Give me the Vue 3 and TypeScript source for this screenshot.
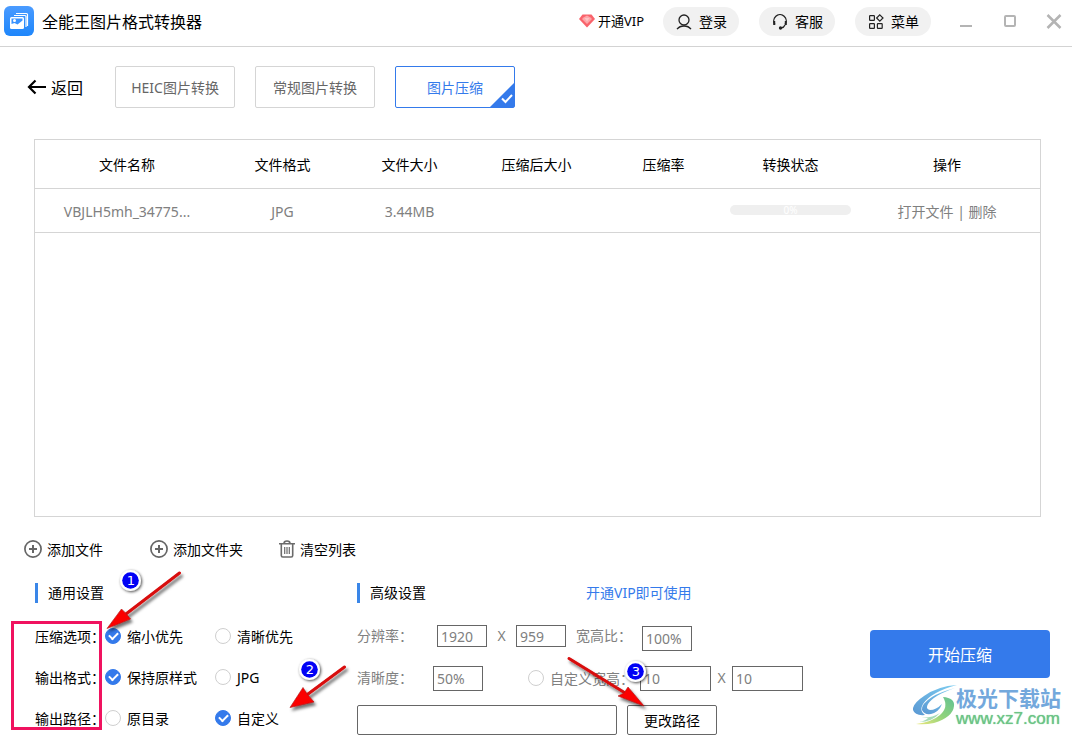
<script setup lang="ts">
import { ref } from 'vue'

interface FileRow {
  name: string
  format: string
  size: string
  compressed: string
  ratio: string
  progress: number
}

interface Choice {
  key: string
  label: string
  options: string[]
}

const tabs = ['HEIC图片转换', '常规图片转换', '图片压缩']
const activeTab = ref('图片压缩')

const columns = ['文件名称', '文件格式', '文件大小', '压缩后大小', '压缩率', '转换状态', '操作']
const files = ref<FileRow[]>([
  { name: 'VBJLH5mh_34775...', format: 'JPG', size: '3.44MB', compressed: '', ratio: '', progress: 0 },
])

const choices: Choice[] = [
  { key: 'mode', label: '压缩选项：', options: ['缩小优先', '清晰优先'] },
  { key: 'format', label: '输出格式：', options: ['保持原样式', 'JPG'] },
  { key: 'path', label: '输出路径：', options: ['原目录', '自定义'] },
]
const selected = ref<Record<string, string>>({ mode: '缩小优先', format: '保持原样式', path: '自定义' })

const resWidth = ref('1920')
const resHeight = ref('959')
const aspect = ref('100%')
const clarity = ref('50%')
const customSize = ref(false)
const customWidth = ref('10')
const customHeight = ref('10')
const outputPath = ref('')
</script>

<template>
  <div class="app">
    <header class="titlebar">
      <svg class="logo" viewBox="0 0 30 30" aria-hidden="true">
        <defs>
          <linearGradient id="logoFill" x1="0" y1="0" x2="0" y2="1">
            <stop offset="0" stop-color="#4a9bff" />
            <stop offset="1" stop-color="#1e86fb" />
          </linearGradient>
        </defs>
        <rect width="30" height="30" rx="6" fill="url(#logoFill)" />
        <path d="M12 7.500h10.500q1 0 1 1V20M10 9.500h11q1 0 1 1V21" fill="none" stroke="#fff" stroke-width="1.200" />
        <rect x="6" y="11" width="14" height="12" rx="1.500" fill="#fff" />
        <path d="M7.500 16v-3.500h11v2l-5 4-3-1.500-3 1z" fill="#3a93fe" />
        <circle cx="10.500" cy="14.500" r="1.500" fill="#fff" />
      </svg>
      <h1 class="title">全能王图片格式转换器</h1>
      <a class="vip" href="#">
        <svg width="16" height="14" viewBox="0 0 16 14" aria-hidden="true">
          <path d="M3.500.5h9L16 5l-8 8.500L0 5z" fill="#f9636b" />
          <path d="M4.500 3.500 8 1.500l3.500 2L13 5l-5 5-5-5z" fill="#fda5a8" />
          <path d="M5.500 4h5L8 7.500z" fill="#fdc3c3" />
        </svg>
        <span>开通VIP</span>
      </a>
      <nav class="pills">
        <button type="button" class="pill">
          <svg width="16" height="16" viewBox="0 0 16 16" fill="none" stroke="#222" stroke-width="1.300" aria-hidden="true">
            <circle cx="8" cy="6" r="5" />
            <path d="M1 15.200q2.500-3.200 7-3.200t7 3.200" />
          </svg>
          登录
        </button>
        <button type="button" class="pill">
          <svg width="16" height="16" viewBox="0 0 16 16" fill="none" stroke="#222" stroke-width="1.300" aria-hidden="true">
            <path d="M3 10.500a6.200 6.200 0 1 1 10 0" />
            <path d="M2.200 7v4M13.800 7v4" stroke-width="2" />
            <path d="M13 11q-1 2.500-4 3" />
            <circle cx="8.500" cy="14" r="1" fill="#222" />
          </svg>
          客服
        </button>
        <button type="button" class="pill">
          <svg width="16" height="16" viewBox="0 0 16 16" fill="none" stroke="#222" stroke-width="1.200" aria-hidden="true">
            <rect x="1.600" y="1.600" width="4.800" height="4.800" rx=".6" />
            <rect x="1.600" y="9.600" width="4.800" height="4.800" rx=".6" />
            <rect x="9.400" y="9.600" width="4.800" height="4.800" rx=".6" />
            <path d="M11.800.8 15 4l-3.200 3.200L8.600 4z" />
          </svg>
          菜单
        </button>
      </nav>
      <div class="window-controls">
        <button type="button" aria-label="最小化">
          <svg width="20" height="20" viewBox="0 0 20 20"><path d="M4 15h12" stroke="#b4b4b4" stroke-width="2" /></svg>
        </button>
        <button type="button" aria-label="最大化">
          <svg width="20" height="20" viewBox="0 0 20 20"><rect x="5" y="5" width="10" height="10" rx="1" fill="none" stroke="#b4b4b4" stroke-width="2" /></svg>
        </button>
        <button type="button" aria-label="关闭">
          <svg width="20" height="20" viewBox="0 0 20 20"><path d="m3.500 4 13 13M16.500 4l-13 13" stroke="#b4b4b4" stroke-width="2.500" /></svg>
        </button>
      </div>
    </header>

    <nav class="tabs">
      <button type="button" class="back">
        <svg width="20" height="16" viewBox="0 0 20 16" fill="none" stroke="#000" stroke-width="2.200" aria-hidden="true">
          <path d="M1.800 8H19M8.500 1.500 2 8l6.500 6.500" />
        </svg>
        <span>返回</span>
      </button>
      <button
        v-for="tab in tabs"
        :key="tab"
        type="button"
        class="tab"
        :class="{ active: tab === activeTab }"
        @click="activeTab = tab"
      >
        {{ tab }}
        <svg v-if="tab === activeTab" class="corner" width="24" height="24" viewBox="0 0 24 24" aria-hidden="true">
          <path d="M24 0v24H0z" fill="#347aeb" />
          <path d="m12 15.500 3.500 3.500 6.500-7" fill="none" stroke="#fff" stroke-width="2" />
        </svg>
      </button>
    </nav>

    <main class="panel">
      <table>
        <colgroup>
          <col class="first-col" />
          <col v-for="n in 5" :key="n" class="narrow" />
          <col />
        </colgroup>
        <thead>
          <tr><th v-for="column in columns" :key="column" scope="col">{{ column }}</th></tr>
        </thead>
        <tbody>
          <tr v-for="file in files" :key="file.name">
            <td>{{ file.name }}</td>
            <td>{{ file.format }}</td>
            <td>{{ file.size }}</td>
            <td>{{ file.compressed }}</td>
            <td>{{ file.ratio }}</td>
            <td>
              <div class="progress"><span>{{ file.progress }}%</span></div>
            </td>
            <td><a href="#">打开文件</a> | <a href="#">删除</a></td>
          </tr>
        </tbody>
      </table>
    </main>

    <div class="tools">
      <button type="button">
        <svg width="18" height="18" viewBox="0 0 18 18" fill="none" stroke="#666" aria-hidden="true">
          <circle cx="9" cy="9" r="8.100" stroke-width="1.700" />
          <path d="M9 5v8M5 9h8" stroke-width="2" />
        </svg>
        <span>添加文件</span>
      </button>
      <button type="button">
        <svg width="18" height="18" viewBox="0 0 18 18" fill="none" stroke="#666" aria-hidden="true">
          <circle cx="9" cy="9" r="8.100" stroke-width="1.700" />
          <path d="M9 5v8M5 9h8" stroke-width="2" />
        </svg>
        <span>添加文件夹</span>
      </button>
      <button type="button">
        <svg width="16" height="18" viewBox="0 0 16 18" fill="none" stroke="#6b6b6b" stroke-width="1.600" aria-hidden="true">
          <path d="M0 3.800h16M5 3.500q0-2.500 3-2.500t3 2.500M2.300 4v11.500q0 1.500 1.500 1.500h8.400q1.500 0 1.500-1.500V4" />
          <path d="M5.700 7v7M8 7v7M10.300 7v7" stroke-width="1.200" />
        </svg>
        <span>清空列表</span>
      </button>
    </div>

    <section class="settings">
      <div class="general">
        <h2>通用设置</h2>
        <div v-for="choice in choices" :key="choice.key" class="line" role="radiogroup" :aria-label="choice.label">
          <span class="name">{{ choice.label }}</span>
          <label v-for="option in choice.options" :key="option" class="option">
            <input v-model="selected[choice.key]" type="radio" :name="choice.key" :value="option" />
            <span>{{ option }}</span>
          </label>
        </div>
      </div>

      <div class="advanced">
        <div class="heading">
          <h2>高级设置</h2>
          <a href="#">开通VIP即可使用</a>
        </div>
        <div class="line">
          <label class="first" for="resWidth">分辨率：</label>
          <input id="resWidth" v-model="resWidth" class="box short" type="text" />
          <span class="times">X</span>
          <input v-model="resHeight" class="box short" type="text" aria-label="分辨率高度" />
          <label class="aspect" for="aspect">宽高比：</label>
          <input id="aspect" v-model="aspect" class="box low" type="text" />
        </div>
        <div class="line">
          <label class="second" for="clarity">清晰度：</label>
          <input id="clarity" v-model="clarity" class="box" type="text" />
          <label class="custom">
            <input v-model="customSize" type="radio" name="customSize" :value="true" />
            <span>自定义宽高：</span>
          </label>
          <input v-model="customWidth" class="box long" type="text" aria-label="自定义宽度" />
          <span class="times tight">X</span>
          <input v-model="customHeight" class="box long" type="text" aria-label="自定义高度" />
        </div>
        <div class="line">
          <input v-model="outputPath" class="path" type="text" aria-label="输出路径" />
          <button type="button" class="change">更改路径</button>
        </div>
      </div>

      <button type="button" class="start">开始压缩</button>

      <svg class="marks" width="720" height="175" viewBox="0 560 720 175" aria-hidden="true">
        <defs>
          <filter id="shade" x="-30%" y="-30%" width="170%" height="170%">
            <feDropShadow dx="2" dy="3" stdDeviation="1.800" flood-color="#000" flood-opacity=".55" />
          </filter>
          <filter id="halo" x="-30%" y="-30%" width="170%" height="170%">
            <feDropShadow dx="1" dy="1" stdDeviation="1.600" flood-color="#000" flood-opacity=".75" />
          </filter>
        </defs>
        <rect x="12.500" y="622.500" width="88" height="106" fill="none" stroke="#f0125f" stroke-width="3" />
        <g filter="url(#shade)">
          <g fill="none" stroke="#d80808" stroke-width="3" stroke-linecap="round">
            <path d="M179.500 573 124 615.500" />
            <path d="M344.500 667 306 695.500" />
            <path d="m569 658.500 57 35" />
          </g>
          <g fill="#fb0505" stroke="#a81010" stroke-width=".6">
            <path d="m107 628.500 14.500-19.500 4.500 4.500 4.500 5.500z" />
            <path d="m290 707.500 13-20 4.500 7 6.500 7.500z" />
            <path d="m644 706-26-10 6-3 4-6z" />
          </g>
        </g>
        <g filter="url(#halo)" fill="#fff">
          <circle cx="130.500" cy="580.500" r="10.500" />
          <circle cx="309.500" cy="669.500" r="10.500" />
          <circle cx="635.500" cy="671.500" r="10.500" />
        </g>
        <g fill="#0101f5">
          <circle cx="130.500" cy="580.500" r="8.300" />
          <circle cx="309.500" cy="669.500" r="8.300" />
          <circle cx="635.500" cy="671.500" r="8.300" />
        </g>
        <g class="digits">
          <text x="131" y="585">1</text>
          <text x="310" y="674">2</text>
          <text x="636" y="676">3</text>
        </g>
      </svg>

      <div class="watermark">
        <svg width="46" height="42" viewBox="0 0 46 42" aria-hidden="true">
          <defs>
            <linearGradient id="swirlBlue" x1="0" y1="1" x2="1" y2="0">
              <stop offset="0" stop-color="#5a98d3" />
              <stop offset="1" stop-color="#7dcdf0" />
            </linearGradient>
            <linearGradient id="swirlGreen" x1="0" y1="1" x2="1" y2="0">
              <stop offset="0" stop-color="#ece77c" />
              <stop offset=".5" stop-color="#8fd37c" />
              <stop offset="1" stop-color="#62c193" />
            </linearGradient>
          </defs>
          <path d="M44 0Q25 1 11 11-1 19 0 25q2 6 12 5-6-4-2-11Q18 7 44 0z" fill="url(#swirlBlue)" />
          <path d="M42 3Q27 7 19 12 8 19 9 25q2 5 9 4 8-2 11-10-6 6-12 6-5-1-2-6Q21 10 42 3z" fill="url(#swirlBlue)" />
          <path d="M30 12q12 1 11 9-1 11-20 17-9 2-18 1 16-2 24-9 9-8 3-18z" fill="url(#swirlGreen)" />
          <path d="M6 32q11 2 21-4-8 9-21 9 6-1 9-4-5 0-9-1z" fill="#a5dbb8" />
        </svg>
        <div class="site">
          <span class="site-name">极光下载站</span>
          <span class="site-url">www.xz7.com</span>
        </div>
      </div>
    </section>
  </div>
</template>

<style>
body {
  margin: 0;
  background: #fff;
}
</style>

<style scoped>
.app {
  display: flex;
  flex-direction: column;
  box-sizing: border-box;
  min-width: 1040px;
  min-height: 100vh;
  font-family: "Noto Sans", "Noto Sans CJK SC", sans-serif;
  font-size: 14px;
  line-height: 20px;
  color: #000;
  background: #fff;
}
button {
  display: flex;
  align-items: center;
  padding: 0;
  border: 0;
  background: none;
  font: inherit;
  color: inherit;
  white-space: nowrap;
  cursor: pointer;
}
a {
  color: inherit;
  text-decoration: none;
}
h1,
h2 {
  margin: 0;
  font-weight: 400;
}
svg {
  flex: none;
  display: block;
}
.titlebar {
  display: flex;
  align-items: center;
  height: 46px;
  padding: 0 8px 0 4px;
  border-bottom: 1px solid #d3d3d3;
}
.logo {
  width: 30px;
  height: 30px;
  margin-bottom: 4px;
}
.title {
  margin: 0 auto 2px 8px;
  font-size: 16px;
}
.vip {
  display: flex;
  align-items: center;
  gap: 3px;
  margin: 0 19px 4px 0;
  font-size: 13px;
}
.pills {
  display: flex;
  gap: 20px;
  margin-bottom: 3px;
}
.pill {
  gap: 7px;
  height: 29px;
  padding: 0 12px 0 13px;
  border-radius: 15px;
  background: #f1f1f1;
}
.window-controls {
  display: flex;
  gap: 24px;
  margin: 0 0 4px 25px;
}
.tabs {
  display: flex;
  gap: 20px;
  padding: 19px 27px 31px;
}
.back {
  gap: 4px;
  margin-right: 12px;
  font-size: 16px;
}
.back span,
.tools span,
.name,
.option span,
.custom span {
  padding-top: 2px;
}
.tab {
  position: relative;
  justify-content: center;
  box-sizing: border-box;
  width: 120px;
  height: 42px;
  padding-top: 2px;
  border: 1px solid #d5d5d5;
  border-radius: 2px;
  color: #666;
}
.tab.active {
  border-color: #347aeb;
  color: #347aeb;
}
.corner {
  position: absolute;
  right: 0;
  bottom: 0;
}
.panel {
  flex: 1;
  margin: 0 31px 0 34px;
  border: 1px solid #d5d5d5;
}
table {
  width: 100%;
  table-layout: fixed;
  border-collapse: separate;
  border-spacing: 0;
  text-align: center;
}
.first-col {
  width: 184px;
}
.narrow {
  width: 127px;
}
th,
td {
  box-sizing: border-box;
  padding: 2px 0 0;
  border-bottom: 1px solid #d5d5d5;
  white-space: nowrap;
}
th {
  height: 49px;
  font-weight: 400;
}
td {
  height: 44px;
  color: #808080;
}
.progress {
  display: flex;
  align-items: center;
  justify-content: center;
  height: 10px;
  margin: 0 3px 4px;
  border-radius: 5px;
  background: #efefef;
  color: #fff;
  font-size: 10px;
}
.tools {
  display: flex;
  height: 22px;
  padding: 21px 24px 23px;
}
.tools button {
  gap: 5px;
}
.tools button:nth-child(1) {
  margin-right: 47px;
}
.tools button:nth-child(2) {
  margin-right: 36px;
}
.settings {
  position: relative;
  display: flex;
  align-items: flex-start;
  padding: 0 22px 0 35px;
}
h2 {
  padding-left: 10px;
  border-left: 3px solid #3a86e8;
  font-size: 14px;
  line-height: 20px;
}
.general {
  display: flex;
  flex-direction: column;
  gap: 11px;
  width: 322px;
}
.general h2 {
  margin-bottom: 7px;
}
.line {
  display: flex;
  align-items: center;
  height: 30px;
  white-space: nowrap;
}
.name {
  width: 70px;
}
.option {
  display: flex;
  align-items: center;
  gap: 6px;
  width: 110px;
}
input[type="radio"] {
  appearance: none;
  position: relative;
  flex: none;
  box-sizing: border-box;
  width: 16px;
  height: 16px;
  margin: 0;
  border: 1px solid #cfcfcf;
  border-radius: 50%;
  background: #fff;
}
input[type="radio"]:checked {
  border-color: #347aeb;
  background: #347aeb;
}
input[type="radio"]:checked::after {
  content: "";
  position: absolute;
  left: 3px;
  top: 3px;
  width: 7px;
  height: 4px;
  border: solid #fff;
  border-width: 0 0 2px 2px;
  transform: rotate(-45deg);
}
.advanced {
  display: flex;
  flex-direction: column;
  gap: 12px;
  color: #808080;
}
.heading {
  display: flex;
  gap: 160px;
  margin-bottom: 6px;
}
.heading h2 {
  color: #000;
}
.heading a {
  color: #347aeb;
}
.first {
  width: 80px;
}
.second {
  width: 76px;
}
.aspect {
  width: 66px;
  margin-left: 10px;
}
.custom {
  display: flex;
  align-items: center;
  gap: 6px;
  width: 112px;
  margin-left: 45px;
}
.box {
  box-sizing: border-box;
  width: 50px;
  height: 25px;
  padding: 0 3px;
  border: 1px solid #666;
  background: #fff;
  font: inherit;
  color: #808080;
}
.short {
  height: 22px;
}
.low {
  align-self: flex-end;
}
.long {
  width: 71px;
}
.times {
  width: 29px;
  text-align: center;
}
.tight {
  width: 21px;
}
.path {
  box-sizing: border-box;
  width: 260px;
  height: 30px;
  padding: 0 6px;
  border: 1px solid #666;
  border-radius: 2px;
  background: #fff;
  font: inherit;
}
.change {
  justify-content: center;
  box-sizing: border-box;
  width: 90px;
  height: 30px;
  margin-left: 10px;
  padding-top: 2px;
  border: 1px solid #666;
  border-radius: 2px;
  color: #000;
}
.start {
  justify-content: center;
  box-sizing: border-box;
  width: 180px;
  height: 48px;
  margin: 47px 0 0 auto;
  padding-top: 2px;
  border-radius: 4px;
  background: #347aeb;
  color: #fff;
  font-size: 16px;
}
.marks {
  position: absolute;
  left: 0;
  bottom: 0;
  pointer-events: none;
}
.digits {
  fill: #fff;
  font-family: "DejaVu Sans", sans-serif;
  font-size: 13px;
  text-anchor: middle;
}
.watermark {
  position: absolute;
  right: 11px;
  bottom: 7px;
  display: flex;
  align-items: center;
  pointer-events: none;
}
.watermark svg {
  margin-right: -3px;
}
.site {
  display: flex;
  flex-direction: column;
}
.site-name {
  font-family: "Noto Sans CJK SC", sans-serif;
  font-size: 21px;
  font-weight: 700;
  line-height: 26px;
  color: #73a8dc;
}
.site-url {
  font-family: "Liberation Sans", sans-serif;
  font-size: 17px;
  line-height: 18px;
  color: #6cc486;
  text-shadow: 0 0 1px #6cc486;
}
</style>
